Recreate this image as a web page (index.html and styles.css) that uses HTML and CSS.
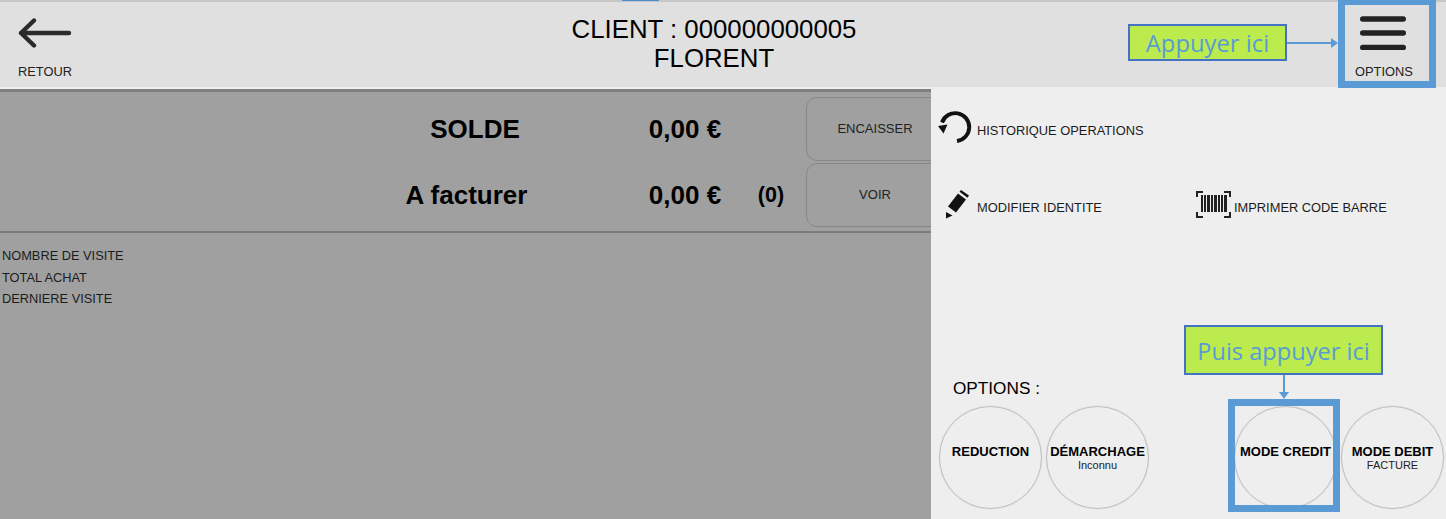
FILE: index.html

```html
<!DOCTYPE html>
<html lang="fr">
<head>
  <meta charset="UTF-8" />
  <title>Client</title>
  <link rel="stylesheet" href="styles.css">
</head>
<body>
  <div class="top-mark"></div>

  <header class="topbar">
    <a class="nav-btn back-btn">
      <svg class="back-icon" width="54" height="32" viewBox="0 0 54 32">
        <path d="M3 16H51M16 3.5L3 16L16 28.5" fill="none" stroke="#2b2b2b" stroke-width="4.4" stroke-linecap="round" stroke-linejoin="round"/>
      </svg>
      <span>RETOUR</span>
    </a>
    <h1 class="client-title">CLIENT : 000000000005<br>FLORENT</h1>
    <a class="nav-btn options-btn">
      <svg class="menu-icon" width="46" height="36" viewBox="0 0 46 36">
        <path d="M2.7 3H43.3M2.7 17H43.3M2.7 31.4H43.3" fill="none" stroke="#222" stroke-width="5.4" stroke-linecap="round"/>
      </svg>
      <span>OPTIONS</span>
    </a>
  </header>

  <main class="content">
    <section class="account">
      <div class="balance-row">
        <div class="balance-label">SOLDE</div>
        <div class="balance-value">0,00 €</div>
        <div class="balance-count"></div>
        <button class="balance-btn">ENCAISSER</button>
      </div>
      <div class="balance-row">
        <div class="balance-label invoice-label">A facturer</div>
        <div class="balance-value">0,00 €</div>
        <div class="balance-count">(0)</div>
        <button class="balance-btn">VOIR</button>
      </div>
      <ul class="stats">
        <li>NOMBRE DE VISITE</li>
        <li>TOTAL ACHAT</li>
        <li>DERNIERE VISITE</li>
      </ul>
    </section>

    <aside class="side-menu">
      <div class="action-row history-row">
        <a class="action">
          <svg class="action-icon" width="34" height="34" viewBox="0 0 34 34">
            <path d="M4 9.5A14 14 0 1 1 19 28" fill="none" stroke="#111" stroke-width="3.9"/>
            <path d="M0 13L9.5 11.5L5.5 20.5Z" fill="#111"/>
          </svg>
          <span>HISTORIQUE OPERATIONS</span>
        </a>
      </div>
      <div class="action-row identity-row">
        <a class="action edit-action">
          <svg class="action-icon" width="34" height="34" viewBox="0 0 34 34">
            <path d="M10 16.5L20 3.5L28 9.5L18 22.5Z" fill="#111"/>
            <path d="M21.5 1.8L23 0L31 5.5L29.5 7.8Z" fill="#111"/>
            <path d="M8 22L8 28.5L14.5 25.5Z" fill="#111"/>
          </svg>
          <span>MODIFIER IDENTITE</span>
        </a>
        <a class="action barcode-action">
          <svg class="barcode-icon" width="36" height="34" viewBox="0 0 36 34">
            <path d="M8 2H2V7M29 2H35V7M2 22V27H8M35 22V27H29" fill="none" stroke="#222" stroke-width="2"/>
            <rect class="bar" x="6" y="5" width="2" height="17"/>
            <rect class="bar" x="9" y="5" width="2" height="17"/>
            <rect class="bar" x="12" y="5" width="3" height="17"/>
            <rect class="bar" x="16" y="5" width="2" height="17"/>
            <rect class="bar" x="19" y="5" width="3" height="17"/>
            <rect class="bar" x="23" y="5" width="2" height="17"/>
            <rect class="bar" x="26" y="5" width="2" height="17"/>
            <rect class="bar" x="29" y="5" width="3" height="17"/>
          </svg>
          <span>IMPRIMER CODE BARRE</span>
        </a>
      </div>
      <div class="mode-title">OPTIONS :</div>
      <div class="mode-list">
        <button class="mode-btn"><b>REDUCTION</b></button>
        <button class="mode-btn"><b>DÉMARCHAGE</b><small>Inconnu</small></button>
        <button class="mode-btn credit-btn"><b>MODE CREDIT</b></button>
        <button class="mode-btn"><b>MODE DEBIT</b><small>FACTURE</small></button>
      </div>
    </aside>
  </main>

  <!-- tutorial annotations drawn over the screen -->
  <div class="callout callout-top">Appuyer ici</div>
  <div class="arrow arrow-right"></div>
  <div class="highlight highlight-options"></div>
  <div class="callout callout-bottom">Puis appuyer ici</div>
  <div class="arrow arrow-down"></div>
  <div class="highlight highlight-credit"></div>
</body>
</html>
```

FILE: styles.css

```css
html, body {
  height: 100%;
}
body {
  margin: 0;
  position: relative;
  overflow: hidden;
  background-color: #eeeeee;
  color: #111;
  font-family: 'Liberation Sans', Arial, sans-serif;
}
.top-mark {
  position: absolute;
  top: 0;
  left: 622px;
  width: 37px;
  height: 1px;
  background-color: #4a8ccc;
}
.topbar {
  height: 87px;
  box-sizing: border-box;
  border-top: 2px solid #c6c6c6;
  background-color: #e0e0e0;
  display: grid;
  grid-template-columns: 359px 1fr 111px;
}
.nav-btn {
  display: flex;
  flex-direction: column;
  font-size: 12.85px;
  color: #222;
}
.back-btn {
  padding: 15px 0 0 18px;
}
.back-icon {
  margin-bottom: 15px;
}
.options-btn {
  padding: 14px 0 0 20px;
}
.menu-icon {
  margin: 0 0 12px 5px;
}
.client-title {
  margin: 0;
  padding-top: 13px;
  width: 710px;
  font-size: 25.8px;
  line-height: 29px;
  font-weight: normal;
  text-align: center;
  color: #000;
}
.content {
  display: flex;
  height: 432px;
}
.account {
  width: 931px;
  flex: none;
  box-sizing: border-box;
  overflow: hidden;
  background-color: #a0a0a0;
  border-top: 2px solid #eeeeee;
  box-shadow: inset 0 3px 0 #7f7f7f;
  padding-top: 8px;
}
.balance-row {
  display: grid;
  grid-template-columns: 290px 130px 42px 138px;
  align-items: center;
  height: 64px;
  margin-bottom: 2px;
  padding-left: 330px;
  font-size: 26px;
  font-weight: bold;
  color: #000;
  text-align: center;
}
.invoice-label {
  padding-right: 17px;
}
.balance-count {
  font-size: 21.5px;
}
.balance-btn {
  height: 64px;
  width: 138px;
  margin-left: 14px;
  box-sizing: border-box;
  border: 1px solid #888;
  border-radius: 11px;
  background: transparent;
  font-family: inherit;
  font-size: 13px;
  color: #222;
  padding: 0 0 1px;
}
.stats {
  list-style: none;
  margin: 4px 0 0;
  padding: 12px 0 0 2px;
  border-top: 2px solid #7c7c7c;
  font-size: 12.8px;
  line-height: 21.5px;
  color: #1c1c1c;
}
.side-menu {
  flex: 1;
  position: relative;
  display: flex;
  flex-direction: column;
}
.action-row {
  display: flex;
  align-items: center;
}
.history-row {
  padding: 26px 0 0 7px;
}
.identity-row {
  padding: 43px 0 0 7px;
}
.action {
  display: flex;
  align-items: center;
  font-size: 12.85px;
  color: #1c1c1c;
}
.action-icon {
  margin-right: 5px;
  overflow: visible;
}
.edit-action {
  width: 257px;
}
.barcode-icon {
  margin-right: 3px;
}
.bar {
  fill: #222;
}
.mode-title {
  margin: 153px 0 0 22px;
  font-size: 17.2px;
  line-height: 22px;
  color: #000;
}
.mode-list {
  display: flex;
  margin: 7px 0 0 8px;
  gap: 4px;
}
.mode-btn {
  width: 103px;
  height: 103px;
  flex: none;
  box-sizing: border-box;
  border: 1px solid #bdbdbd;
  box-shadow: 0 0 0 0.5px #dddddd;
  border-radius: 50%;
  background: transparent;
  font-family: inherit;
  color: #000;
  display: flex;
  flex-direction: column;
  align-items: center;
  justify-content: flex-start;
  padding: 36px 0 0;
}
.mode-btn b {
  font-size: 13px;
  line-height: 17px;
  white-space: nowrap;
}
.mode-btn small {
  margin-top: -1px;
  font-size: 11px;
  line-height: 12px;
  color: #222;
}
.credit-btn {
  margin-left: 81px;
}
.callout {
  position: absolute;
  box-sizing: border-box;
  display: flex;
  align-items: center;
  justify-content: center;
  border: 2px solid #4472c4;
  background-color: #bbeb4d;
  color: #5b9bd5;
  font-family: 'Open Sans', sans-serif;
  white-space: nowrap;
}
.callout-top {
  left: 1128px;
  top: 24px;
  width: 159px;
  height: 37px;
  font-size: 23.8px;
}
.callout-bottom {
  left: 1184px;
  top: 325px;
  width: 199px;
  height: 50px;
  padding-top: 2px;
  font-size: 23.6px;
}
.highlight {
  position: absolute;
  box-sizing: border-box;
  border: 7px solid #5b9bd5;
}
.highlight-options {
  left: 1338px;
  top: -2px;
  width: 98px;
  height: 90px;
}
.highlight-credit {
  left: 1228px;
  top: 399px;
  width: 112px;
  height: 113px;
}
.arrow {
  position: absolute;
  background-color: #5b9bd5;
}
.arrow::after {
  content: "";
  position: absolute;
  border-style: solid;
  border-color: transparent;
}
.arrow-right {
  left: 1287px;
  top: 42px;
  width: 44px;
  height: 2px;
}
.arrow-right::after {
  right: -7px;
  top: -4px;
  border-width: 5px 0 5px 7px;
  border-left-color: #5b9bd5;
}
.arrow-down {
  left: 1283px;
  top: 375px;
  width: 2px;
  height: 17px;
}
.arrow-down::after {
  left: -4px;
  bottom: -7px;
  border-width: 7px 5px 0 5px;
  border-top-color: #5b9bd5;
}
```
